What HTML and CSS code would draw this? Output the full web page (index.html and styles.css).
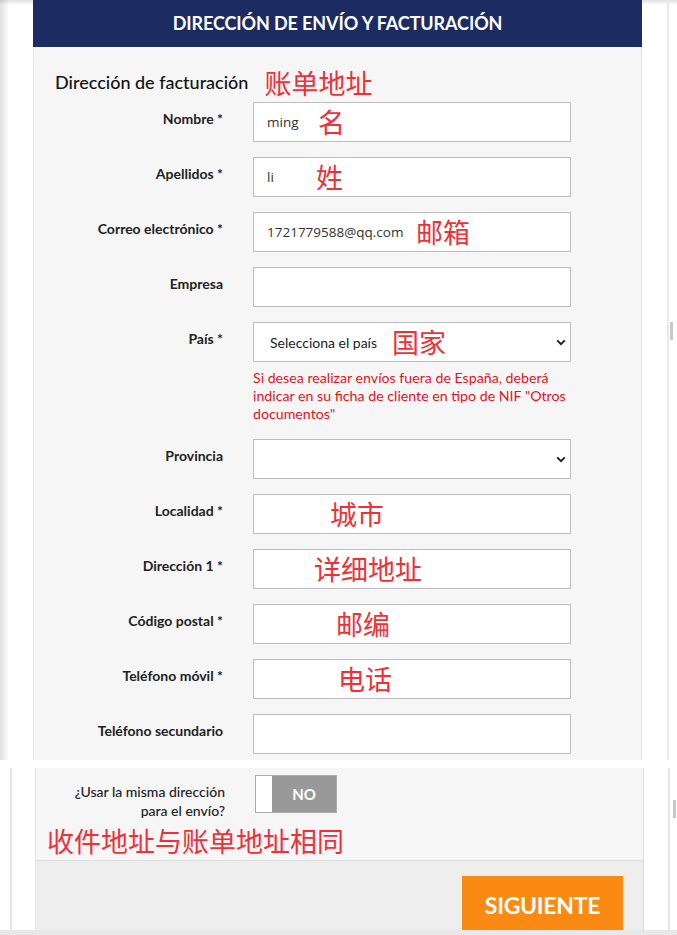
FILE: index.html
```html
<!DOCTYPE html>
<html lang="es">
<head>
<meta charset="utf-8">
<title>Dirección de envío y facturación</title>
<link rel="stylesheet" href="styles.css">
</head>
<body>
<div class="screen">
  <div class="shot shot-top">
    <div class="gutter-l gutter-l-top"></div>
    <section class="panel">
      <header class="panel-head">DIRECCIÓN DE ENVÍO Y FACTURACIÓN</header>
      <div class="panel-body">
        <h2 class="section-title"><span>Dirección de facturación</span><span class="note-title">账单地址</span></h2>
        <div class="form">
          <div class="row">
            <label class="lbl">Nombre *</label>
            <div class="field"><input class="input" type="text" value="ming"><span class="note n-nombre">名</span></div>
          </div>
          <div class="row">
            <label class="lbl">Apellidos *</label>
            <div class="field"><input class="input" type="text" value="li"><span class="note n-apellidos">姓</span></div>
          </div>
          <div class="row">
            <label class="lbl">Correo electrónico *</label>
            <div class="field"><input class="input" type="text" value="1721779588@qq.com"><span class="note n-correo">邮箱</span></div>
          </div>
          <div class="row">
            <label class="lbl">Empresa</label>
            <div class="field"><input class="input" type="text" value=""></div>
          </div>
          <div class="row">
            <label class="lbl">País *</label>
            <div class="field">
              <div class="select-wrap">
                <select class="select"><option>Selecciona el país</option></select>
                <svg class="chev" width="10" height="7" viewBox="0 0 10 7"><path d="M1.2 1.4 L5 5.2 L8.8 1.4" fill="none" stroke="#222" stroke-width="2"/></svg>
                <span class="note n-pais">国家</span>
              </div>
              <p class="help">Si desea realizar envíos fuera de España, deberá indicar en su ficha de cliente en tipo de NIF "Otros documentos"</p>
            </div>
          </div>
          <div class="row">
            <label class="lbl">Provincia</label>
            <div class="field">
              <div class="select-wrap">
                <select class="select"><option></option></select>
                <svg class="chev" width="10" height="7" viewBox="0 0 10 7"><path d="M1.2 1.4 L5 5.2 L8.8 1.4" fill="none" stroke="#222" stroke-width="2"/></svg>
              </div>
            </div>
          </div>
          <div class="row">
            <label class="lbl">Localidad *</label>
            <div class="field"><input class="input" type="text" value=""><span class="note n-localidad">城市</span></div>
          </div>
          <div class="row">
            <label class="lbl">Dirección 1 *</label>
            <div class="field"><input class="input" type="text" value=""><span class="note n-direccion">详细地址</span></div>
          </div>
          <div class="row">
            <label class="lbl">Código postal *</label>
            <div class="field"><input class="input" type="text" value=""><span class="note n-postal">邮编</span></div>
          </div>
          <div class="row">
            <label class="lbl">Teléfono móvil *</label>
            <div class="field"><input class="input" type="text" value=""><span class="note n-movil">电话</span></div>
          </div>
          <div class="row">
            <label class="lbl">Teléfono secundario</label>
            <div class="field"><input class="input" type="text" value=""></div>
          </div>
        </div>
      </div>
    </section>
    <div class="gutter-r gutter-r-top">
      <div class="rail rail-top"></div>
      <div class="track"><div class="thumb thumb-top"></div></div>
    </div>
  </div>

  <div class="gap"></div>

  <div class="shot shot-bottom">
    <div class="gutter-l gutter-l-bottom"></div>
    <section class="panel">
      <div class="panel-body panel-body-2">
        <div class="toggle-row">
          <label class="lbl lbl-2">¿Usar la misma dirección<br>para el envío?</label>
          <div class="toggle"><span class="knob"></span><span class="state">NO</span></div>
        </div>
        <p class="note-big">收件地址与账单地址相同</p>
      </div>
      <div class="panel-foot">
        <button class="btn" type="button">SIGUIENTE</button>
      </div>
    </section>
    <div class="gutter-r gutter-r-bottom">
      <div class="rail rail-bottom"></div>
      <div class="track"><div class="thumb thumb-bottom"></div></div>
    </div>
  </div>
  <div class="bottom-strip"></div>
</div>
</body>
</html>
```

FILE: styles.css
```css
* { box-sizing: border-box; }

body {
  margin: 0;
  background: #fff;
  font-family: Lato, "Noto Sans CJK SC", sans-serif;
  color: #222;
}

.screen {
  width: 677px;
  height: 935px;
  overflow: hidden;
}

.shot {
  display: flex;
  overflow: hidden;
}

.shot-top { height: 760px; }
.shot-bottom { height: 162px; }
.gap { height: 8px; }
.bottom-strip { height: 5px; background: #e8e8e8; }

/* gutters */
.gutter-l { flex: none; }
.gutter-l-top {
  width: 33px;
  background:
    linear-gradient(to bottom, rgba(0,0,0,0.12) 0, rgba(0,0,0,0) 5px),
    linear-gradient(to right, #e0e0e0 0, #eeeeee 4px, #f7f7f7 7px, #fff 9px);
}
.gutter-l-bottom {
  width: 35px;
  background: linear-gradient(to right, #fff 0, #fff 10px, #e3e3e3 10px, #e3e3e3 12px, #fff 12px);
}

.gutter-r {
  flex: 1;
  display: flex;
  background: #fff;
}
.gutter-r-top {
  padding-left: 25px;
  background: linear-gradient(to bottom, rgba(0,0,0,0.12) 0, rgba(0,0,0,0) 5px), #fff;
}
.gutter-r-bottom { padding-left: 24px; }

.rail { width: 2px; background: #ebebeb; }
.rail-bottom { background: #e6e6e6; }
.track { flex: 1; }
.thumb { width: 3px; height: 18px; background: #c8c8c8; }
.thumb-top { margin-top: 322px; margin-left: 1px; }
.thumb-bottom { margin-top: 32px; margin-left: 3px; }

/* panel */
.panel {
  width: 609px;
  flex: none;
  display: flex;
  flex-direction: column;
}

.panel-head {
  height: 47px;
  background: #1d2b63;
  color: #fff;
  font-weight: 700;
  font-size: 18px;
  line-height: 47px;
  text-align: center;
  letter-spacing: -0.1px;
}

.panel-body {
  flex: 1;
  background: #f6f6f6;
  border-left: 1px solid #e4e4e4;
  border-right: 1px solid #dedede;
  padding-top: 20px;
}

.section-title {
  margin: 0 0 0 21px;
  height: 30px;
  display: flex;
  align-items: center;
  font-size: 18px;
  font-weight: 500;
  color: #111;
}

.note-title {
  margin-left: 16px;
  font-family: "Noto Sans CJK SC", sans-serif;
  font-weight: 400;
  font-size: 27px;
  color: #ef3038;
}

.form {
  margin-top: 5px;
  display: flex;
  flex-direction: column;
  gap: 15px;
}

.row {
  display: grid;
  grid-template-columns: 189px 318px;
  column-gap: 30px;
}

.lbl {
  text-align: right;
  font-size: 14px;
  font-weight: 700;
  line-height: 16px;
  padding-top: 9px;
  color: #222;
}

.field { position: relative; }

.input, .select {
  display: block;
  width: 318px;
  height: 40px;
  border: 1px solid #bdbdbd;
  background: #fff;
  margin: 0;
  border-radius: 0;
  outline: none;
}

.input {
  padding: 0 12px 0 13px;
  font-family: "Open Sans", sans-serif;
  font-size: 13.5px;
  color: #333;
}

.select-wrap { position: relative; }

.select {
  -webkit-appearance: none;
  appearance: none;
  padding: 0 30px 0 16px;
  font-family: Lato, sans-serif;
  font-size: 14px;
  color: #222;
}

.chev {
  position: absolute;
  right: 5px;
  top: 17px;
  pointer-events: none;
}

.note {
  position: absolute;
  top: 0;
  line-height: 40px;
  font-family: "Noto Sans CJK SC", sans-serif;
  font-size: 27px;
  color: #ef3038;
  pointer-events: none;
  white-space: nowrap;
}
.n-nombre { left: 65px; }
.n-apellidos { left: 63px; }
.n-correo { left: 163px; }
.n-pais { left: 139px; }
.n-localidad { left: 77px; }
.n-direccion { left: 61px; }
.n-postal { left: 83px; }
.n-movil { left: 85px; }

.help {
  margin: 7px 0 0 0;
  padding-bottom: 1px;
  font-size: 14.2px;
  line-height: 18px;
  color: #e2141f;
}

/* second shot */
.panel-body-2 {
  flex: none;
  height: 92px;
  padding-top: 7px;
}

.toggle-row {
  display: grid;
  grid-template-columns: 189px 82px;
  column-gap: 30px;
}

.lbl-2 {
  padding-top: 7px;
  line-height: 19px;
  font-weight: 500;
}

.toggle {
  display: flex;
  height: 38px;
  border: 1px solid #aaa;
  background: #999;
}
.knob { width: 16px; background: #fff; }
.state {
  flex: 1;
  display: flex;
  align-items: center;
  justify-content: center;
  color: #fff;
  font-weight: 700;
  font-size: 15px;
}

.note-big {
  margin: 3px 0 0 11px;
  line-height: 36px;
  font-family: "Noto Sans CJK SC", sans-serif;
  font-size: 27px;
  color: #ef3038;
  white-space: nowrap;
}

.panel-foot {
  flex: 1;
  background: #eeeeee;
  border-top: 1px solid #dcdcdc;
  border-left: 1px solid #e4e4e4;
  border-right: 1px solid #dedede;
  display: flex;
  justify-content: flex-end;
  align-items: flex-start;
  padding: 15px 20px 0 0;
}

.btn {
  width: 161px;
  height: 58px;
  border: 0;
  border-radius: 0;
  background: #fb8a14;
  color: #fff;
  font-family: Lato, sans-serif;
  font-weight: 700;
  font-size: 23px;
  letter-spacing: -0.3px;
  padding: 0;
}
```
